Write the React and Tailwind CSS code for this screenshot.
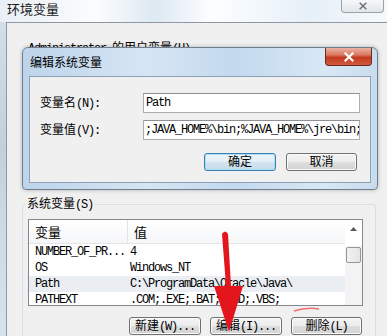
import React from 'react'

const mono = "font-['Liberation_Mono',monospace] text-[12px] tracking-[-1.2px]"

function Mnemonic({ zh, tail }) {
  return (
    <span className="whitespace-nowrap">
      <span>{zh}</span>
      <span className={mono}>{tail}</span>
    </span>
  )
}

function WinButton({ zh, tail, focused, width = 'w-[72px]' }) {
  return (
    <div
      className={`flex h-[18px] ${width} items-center justify-center rounded-[3px] border leading-none ${
        focused
          ? 'border-[#3c7fb1] bg-[linear-gradient(#eef5fa_0%,#e3eef7_50%,#d3e4f1_50%,#c6dcec_100%)] shadow-[inset_0_0_0_1px_#a8dcf7]'
          : 'border-[#707070] bg-[linear-gradient(#f4f4f4_0%,#ececec_50%,#dedede_50%,#d2d2d2_100%)] shadow-[inset_0_0_0_1px_#fbfbfb]'
      }`}
    >
      <Mnemonic zh={zh} tail={tail} />
    </div>
  )
}

function XGlyph({ color, size = 9, stroke = 2 }) {
  return (
    <svg width={size} height={size} viewBox="0 0 10 10">
      <path d="M1.5 1.5 L8.5 8.5 M8.5 1.5 L1.5 8.5" stroke={color} strokeWidth={stroke} strokeLinecap="square" />
    </svg>
  )
}

const rows = [
  { name: 'NUMBER_OF_PR...', value: '4' },
  { name: 'OS', value: 'Windows_NT' },
  { name: 'Path', value: 'C:\\ProgramData\\Oracle\\Java\\', selected: true },
  { name: 'PATHEXT', value: '.COM;.EXE;.BAT;.CMD;.VBS;' },
]

export default function App() {
  return (
    <div className="relative h-[336px] w-[387px] overflow-hidden bg-[#dbe5ee] font-['Noto_Sans_CJK_SC',sans-serif] text-[12px] text-black">
      {/* outer window title bar */}
      <div className="flex h-[22px] items-start justify-between bg-[linear-gradient(90deg,#e9eff5,#fbfcfd_25%,#dde9f3_40%,#fdfeff_55%,#e6f0f8_80%,#f5f9fc)]">
        <span className="ml-[7px] pt-[1px] text-[13px] leading-[16px] text-[#1a1a1a]">环境变量</span>
        <div className="mr-[3px] flex h-[13px] w-[43px] items-center justify-center rounded-b-[4px] border border-t-0 border-[#9aa1a8] bg-[linear-gradient(#f6f8fa,#e1e6ea)]">
          <XGlyph color="#6b7078" size={8} stroke={1.8} />
        </div>
      </div>

      <div className="flex h-[314px]">
        <div className="w-[6px] bg-[linear-gradient(#d2dee8,#c3d0dc_40%,#cfdbe5_70%,#d8e2eb)]" />
        <div className="flex-1 border-l border-t border-[#8d98a3] bg-[#f0f0f0]">
          {/* user variables (mostly hidden behind the dialog) */}
          <div className="ml-[21px] mt-[17px] h-[14px] leading-[14px]">
            <span className={mono}>Administrator </span>
            <span>的用户变量</span>
            <span className={mono}>(U)</span>
          </div>
          <div className="h-[142px]" />

          {/* system variables */}
          <fieldset className="ml-[15px] mr-[11px] rounded-[3px] border border-[#d5dfe5] px-[5px] pb-[10px]">
            <legend className="-ml-[3px] px-[2px] leading-[14px]">
              <Mnemonic zh="系统变量" tail="(S)" />
            </legend>
            <div className="mt-[7px] flex h-[87px] w-[335px] overflow-hidden border border-[#828790] bg-white">
              <div className="flex-1">
                <div className="flex h-[24px] items-center border-b border-[#e5e5e5] bg-[linear-gradient(#ffffff,#f5f6f8)] text-[13px]">
                  <div className="flex h-full w-[99px] items-center border-r border-[#e3e3e3] pl-[6px]">变量</div>
                  <div className="pl-[6px]">值</div>
                </div>
                {rows.map((r) => (
                  <div
                    key={r.name}
                    className={`flex h-[16px] items-center whitespace-nowrap ${mono} ${r.selected ? 'bg-[#eaeef3]' : ''}`}
                  >
                    <div className="w-[101px] pl-[6px]">{r.name}</div>
                    <div>{r.value}</div>
                  </div>
                ))}
              </div>
              <div className="flex w-[17px] flex-col bg-[#f3f3f3]">
                <div className="flex h-[26px] items-start justify-center bg-white pt-[7px]">
                  <svg width="7" height="4" viewBox="0 0 7 4">
                    <path d="M0 4 L3.5 0 L7 4 Z" fill="#5a5a5a" />
                  </svg>
                </div>
                <div className="mx-[1px] mt-[1px] h-[16px] rounded-[2px] border border-[#979797] bg-[linear-gradient(90deg,#f2f2f2,#e4e4e4)]" />
              </div>
            </div>
            <div className="mt-[11px] flex w-[335px] justify-end gap-[9px] pr-[1px]">
              <WinButton zh="新建" tail="(W)..." />
              <WinButton zh="编辑" tail="(I)..." />
              <WinButton zh="删除" tail="(L)" width="w-[71px]" />
            </div>
          </fieldset>
        </div>
      </div>

      {/* edit dialog */}
      <div className="absolute left-[22px] top-[47px] h-[143px] w-[356px] rounded-t-[6px] rounded-b-[4px] border border-[#6e7e90] bg-[linear-gradient(90deg,#bdd4ea,#d6e5f3_35%,#c3d9ee_60%,#d8e7f4_85%,#c9dcee)] shadow-[0_0_4px_rgba(0,0,0,0.25)]">
        <div className="flex h-[28px] items-start justify-between">
          <span className="ml-[7px] mt-[7px] leading-[14px]">编辑系统变量</span>
          <div className="mr-[5px] flex h-[18px] w-[47px] items-center justify-center rounded-b-[4px] border border-t-0 border-[#6b2a1f] bg-[linear-gradient(#eab2a3,#dc7a63_40%,#c33a1f_55%,#d35a3e)]">
            <XGlyph color="#ffffff" size={10} stroke={2.2} />
          </div>
        </div>
        <div className="mx-[6px] h-[107px] border border-[#8da0b6] bg-[#f0f0f0]">
          <div className="mt-[16px] flex h-[20px] items-center">
            <div className="w-[113px] pl-[10px]">
              <Mnemonic zh="变量名" tail="(N):" />
            </div>
            <div className={`flex h-[20px] w-[217px] items-center overflow-hidden whitespace-nowrap border border-[#abadb3] border-t-[#8e9196] bg-white px-[2px] ${mono}`}>
              Path
            </div>
          </div>
          <div className="mt-[7px] flex h-[20px] items-center">
            <div className="w-[113px] pl-[10px]">
              <Mnemonic zh="变量值" tail="(V):" />
            </div>
            <div className={`flex h-[20px] w-[217px] items-center overflow-hidden whitespace-nowrap border border-[#abadb3] border-t-[#8e9196] bg-white px-[1px] ${mono}`}>
              ;JAVA_HOME%\bin;%JAVA_HOME%\jre\bin;
            </div>
          </div>
          <div className="mt-[13px] flex justify-end gap-[10px] pr-[13px]">
            <WinButton zh="确定" tail="" focused />
            <WinButton zh="取消" tail="" width="w-[71px]" />
          </div>
        </div>
      </div>

      {/* red arrow annotation */}
      <svg className="pointer-events-none absolute left-0 top-0" width="387" height="336" viewBox="0 0 387 336">
        <path d="M222 234 Q225 229 228 234 L231 286 L243 286 L229 332 L214 286 L226 286 Z" fill="#e3161d" />
        <path d="M294 311 Q306 307 319 309" stroke="#f07070" strokeWidth="1.5" fill="none" />
      </svg>
    </div>
  )
}
